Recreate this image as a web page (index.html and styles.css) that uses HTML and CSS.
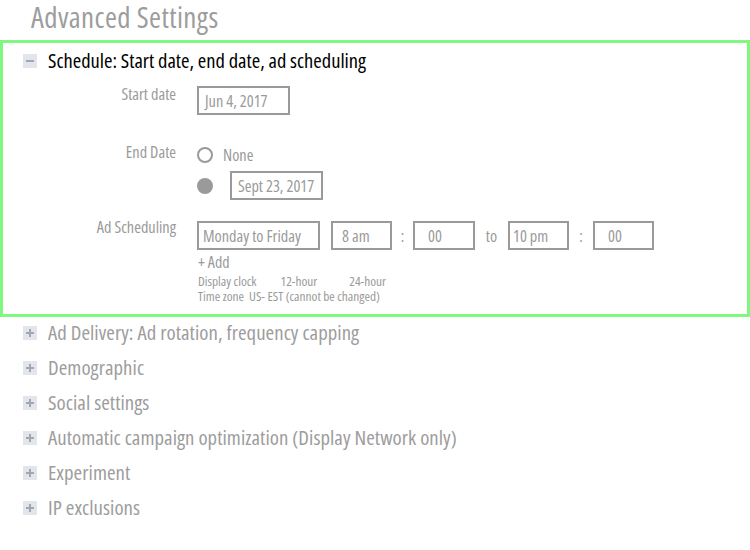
FILE: index.html
```html
<!DOCTYPE html>
<html>
<head>
<meta charset="utf-8">
<link rel="stylesheet" href="styles.css">
</head>
<body>
<h1 class="title">Advanced Settings</h1>
<section class="panel">
  <div class="panel-head">
    <span class="toggle"><span class="bar"></span></span>
    <span class="head-text">Schedule: Start date, end date, ad scheduling</span>
  </div>
  <div class="field field-start">
    <div class="label">Start date</div>
    <div class="control">
      <div class="box box-start">Jun 4, 2017</div>
    </div>
  </div>
  <div class="field field-end">
    <div class="label">End Date</div>
    <div class="control radios">
      <div class="radio-line">
        <span class="radio"></span><span class="radio-text">None</span>
      </div>
      <div class="radio-line">
        <span class="radio checked"></span><div class="box box-end">Sept 23, 2017</div>
      </div>
    </div>
  </div>
  <div class="field field-sched">
    <div class="label">Ad Scheduling</div>
    <div class="control">
      <div class="sched-row">
        <div class="box box-days">Monday to Friday</div>
        <div class="box box-hour">8 am</div>
        <span class="colon">:</span>
        <div class="box box-min">00</div>
        <span class="to">to</span>
        <div class="box box-hour2">10 pm</div>
        <span class="colon colon2">:</span>
        <div class="box box-min2">00</div>
      </div>
      <div class="add">+ Add</div>
      <div class="small clock"><span>Display clock</span><span class="c12">12-hour</span><span class="c24">24-hour</span></div>
      <div class="small"><span>Time zone</span><span class="tz">US- EST (cannot be changed)</span></div>
    </div>
  </div>
</section>
<ul class="sections">
  <li><span class="toggle plus"><span class="bar"></span><span class="bar vbar"></span></span><span>Ad Delivery: Ad rotation, frequency capping</span></li>
  <li><span class="toggle plus"><span class="bar"></span><span class="bar vbar"></span></span><span>Demographic</span></li>
  <li><span class="toggle plus"><span class="bar"></span><span class="bar vbar"></span></span><span>Social settings</span></li>
  <li><span class="toggle plus"><span class="bar"></span><span class="bar vbar"></span></span><span>Automatic campaign optimization (Display Network only)</span></li>
  <li><span class="toggle plus"><span class="bar"></span><span class="bar vbar"></span></span><span>Experiment</span></li>
  <li><span class="toggle plus"><span class="bar"></span><span class="bar vbar"></span></span><span>IP exclusions</span></li>
</ul>
</body>
</html>
```

FILE: styles.css
```css
* { box-sizing: border-box; }
html, body { margin: 0; padding: 0; background: #fff; }
body {
  width: 750px;
  height: 550px;
  overflow: hidden;
  font-family: "Open Sans", "Liberation Sans", sans-serif;
  font-stretch: 75%;
  color: #9a9a9a;
}
.title {
  margin: 0;
  height: 40px;
  padding: 0 0 0 31px;
  font-size: 29px;
  letter-spacing: 0.4px;
  line-height: 34px;
  font-weight: normal;
  color: #9d9d9d;
}
.panel {
  width: 750px;
  height: 277px;
  border: 3px solid #80f880;
  padding: 7px 0 0 20px;
}
.panel-head {
  display: flex;
  align-items: center;
  gap: 11px;
  height: 22px;
}
.toggle {
  position: relative;
  width: 14px;
  height: 14px;
  background: #e2e6ec;
  flex: none;
}
.toggle .bar {
  position: absolute;
  left: 3px;
  top: 6px;
  width: 8px;
  height: 2px;
  background: #a2a6ad;
}
.toggle .vbar {
  left: 6px;
  top: 3px;
  width: 2px;
  height: 8px;
}
.head-text {
  font-size: 20.5px;
  line-height: 22px;
  padding-bottom: 2px;
  color: #000;
}
.field {
  display: flex;
  align-items: flex-start;
  gap: 21px;
  margin-left: -20px;
}
.label {
  width: 173px;
  text-align: right;
  font-size: 16.3px;
  line-height: 20px;
}
.field-start { margin-top: 12px; }
.field-start .box { margin-top: 2px; }
.field-end { margin-top: 27px; }
.field-sched { margin-top: 17px; }
.box {
  border: 2px solid #9a9a9a;
  height: 29px;
  display: flex;
  align-items: center;
  font-size: 16.3px;
  color: #9a9a9a;
  padding-left: 6px;
  flex: none;
  white-space: nowrap;
}
.box-start { width: 93px; }
.radios { display: flex; flex-direction: column; }
.radio-line { display: flex; align-items: center; }
.radio-line:first-child { height: 26px; }
.radio-line:last-child { margin-top: 3px; }
.radio {
  width: 16px;
  height: 16px;
  border: 2px solid #9a9a9a;
  border-radius: 50%;
  flex: none;
}
.radio.checked { background: #9a9a9a; border-color: #9a9a9a; }
.radio-text { margin-left: 10px; font-size: 16.3px; }
.box-end { margin-left: 17px; width: 93px; }
.sched-row {
  display: flex;
  align-items: center;
  margin-top: 4px;
}
.box-days { width: 123px; padding-left: 4px; }
.box-hour { width: 61px; margin-left: 11px; padding-left: 9px; }
.colon { width: 21px; text-align: center; font-size: 16px; }
.box-min { width: 62px; padding-left: 13px; }
.to { width: 33px; text-align: center; font-size: 16.3px; }
.box-hour2 { width: 61px; padding-left: 3px; }
.colon2 { width: 24px; }
.box-min2 { width: 61px; padding-left: 13px; }
.add {
  font-size: 16px;
  line-height: 18px;
  margin-top: 3px;
  padding-left: 1px;
}
.small {
  font-size: 13.3px;
  line-height: 15px;
  padding-left: 1px;
}
.clock { margin-top: 3px; }
.c12 { margin-left: 24px; }
.c24 { margin-left: 32px; }
.tz { margin-left: 5px; }
.sections {
  list-style: none;
  margin: 0;
  padding: 0 0 0 23px;
}
.sections li {
  display: flex;
  align-items: center;
  gap: 11px;
  height: 35px;
  padding-bottom: 6px;
  font-size: 20.8px;
  letter-spacing: 0.05px;
  color: #9d9d9d;
}
.sections li .toggle { margin-top: 2px; }
```
